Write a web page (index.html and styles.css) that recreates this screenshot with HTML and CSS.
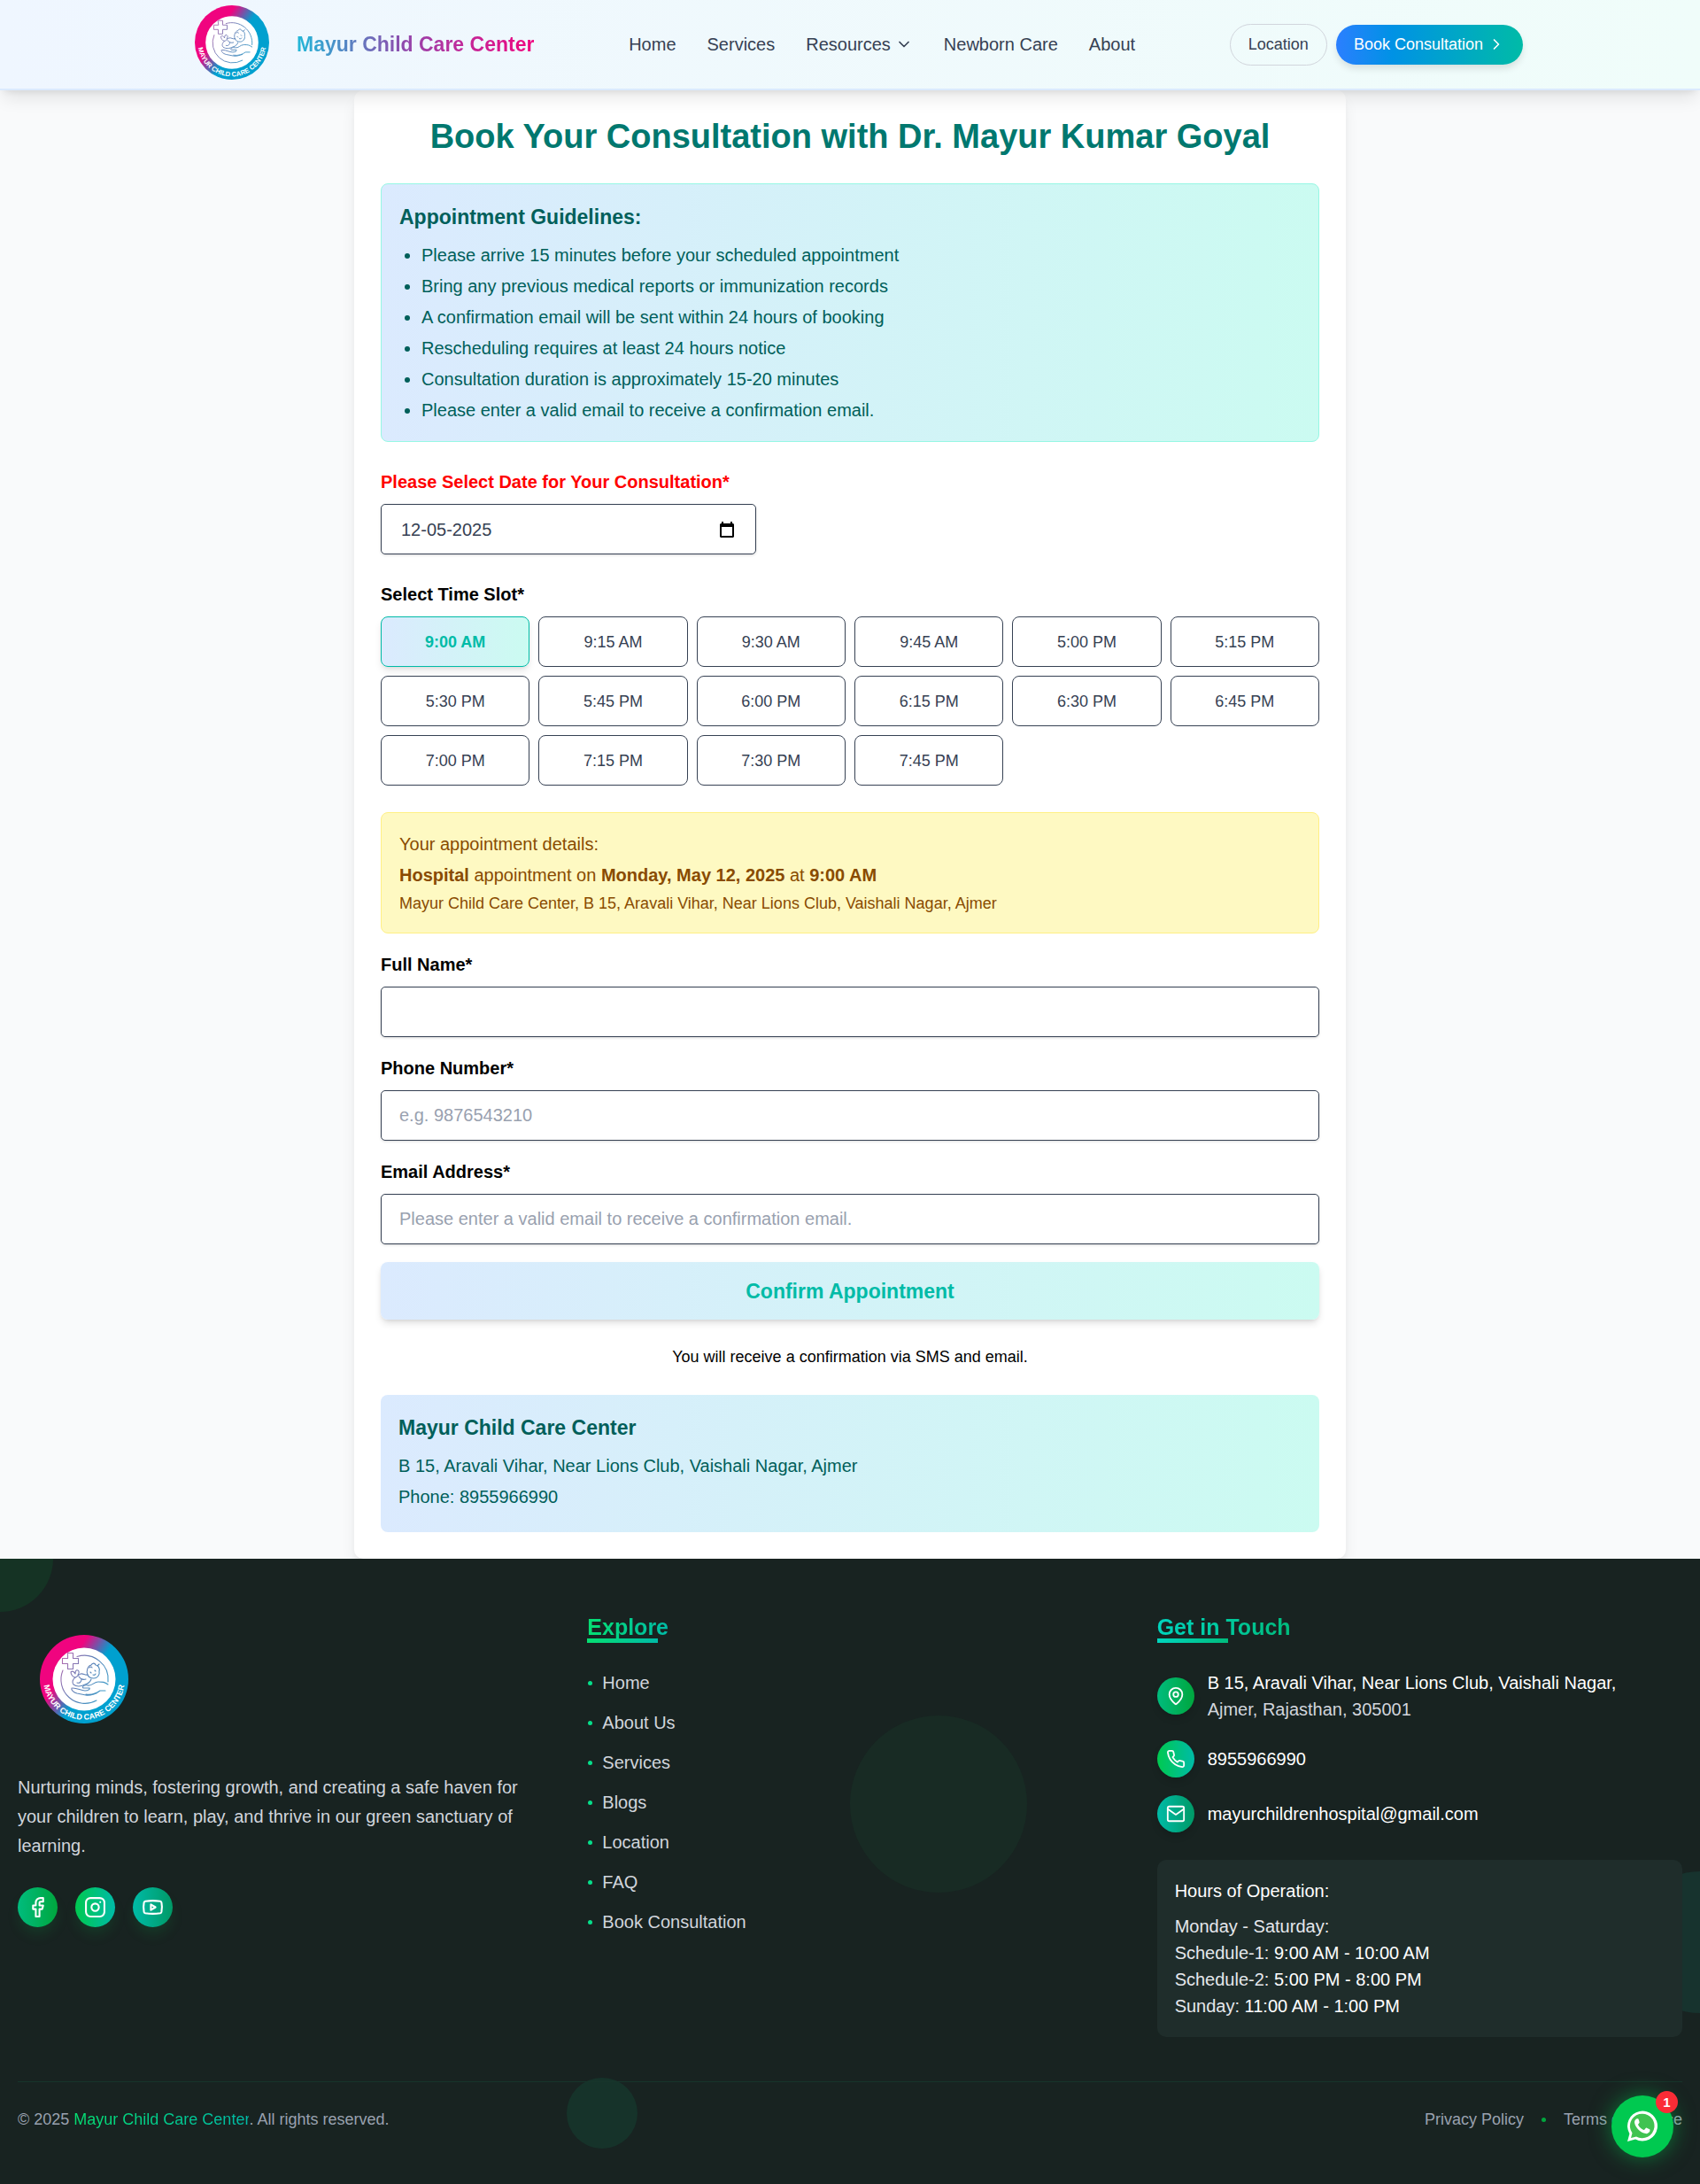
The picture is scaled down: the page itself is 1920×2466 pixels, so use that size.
FILE: index.html
```html
<!DOCTYPE html>
<html lang="en">
<head>
<meta charset="utf-8">
<meta name="viewport" content="width=device-width, initial-scale=1">
<title>Book Consultation | Mayur Child Care Center</title>
<link rel="stylesheet" href="styles.css">
</head>
<body>
<svg class="sprite" aria-hidden="true">
  <defs>
    <linearGradient id="ring" gradientUnits="userSpaceOnUse" x1="30" y1="37" x2="54" y2="53">
      <stop offset="0" stop-color="#f0047f"/><stop offset="1" stop-color="#00a0cf"/>
    </linearGradient>
    <linearGradient id="line" gradientUnits="userSpaceOnUse" x1="24" y1="30" x2="78" y2="60">
      <stop offset="0" stop-color="#b06bb0"/><stop offset=".5" stop-color="#5f83b8"/><stop offset="1" stop-color="#3a9cc8"/>
    </linearGradient>
    <path id="arc" d="M4.500 56.500 A46 46 0 0 0 95.500 56.500"/>
    <symbol id="logo" viewBox="0 0 100 100">
      <circle cx="50" cy="50" r="50" fill="url(#ring)"/>
      <circle cx="50" cy="50" r="35.500" fill="#fff"/>
      <g fill="none" stroke="url(#line)" stroke-width="1.100" stroke-linecap="round" stroke-linejoin="round">
        <path d="M42 24.500A27 27 0 0 1 77 53M26 40a27 27 0 0 0 38 34"/>
        <path d="M31.500 20.500h6v6h6v6h-6v6h-6v-6h-6v-6h6z"/>
        <path d="M54 45c-2-4 0-10 4-11 1-2 4-3 5 0 3 0 5 4 4 7 1 4-2 8-6 8-3 0-6-1-7-4z"/>
        <path d="M57 42l1 1M62 40l1 1M60 45q2 1 3-1M56 37q2-2 3 0M65 35l2-2"/>
        <path d="M54 45c-3 1-5-2-8-1-3 1-4 4-6 4-3 0-5-4-5-6 2-2 4 0 5 2 0-3 1-5 3-4 2 1 1 4 0 5"/>
        <path d="M40 48c-3 2-4 6-2 8 4 3 9 2 13 0 4-1 6-3 7-6M44 47c2 3 5 4 8 3M47 50c0 3-2 5-5 4"/>
        <path d="M36 60c-1 2 2 5 6 6l10 2c4 1 8-1 12-2M37 60c6 0 9 3 14 3 4 0 6-2 5-3l-7 0c-2-2 2-4 5-3 5 1 7-4 12-4s7 0 11 3M52 67c7 1 12-1 16-4l6 0"/>
      </g>
      <text class="logo-text"><textPath href="#arc" startOffset="50%" text-anchor="middle">MAYUR CHILD CARE CENTER</textPath></text>
    </symbol>
  </defs>
</svg>

<header class="site-header">
  <div class="header-inner">
    <a class="brand" href="#">
      <svg class="brand-logo" role="img" aria-label="Logo"><use href="#logo"/></svg>
      <span class="brand-name">Mayur Child Care Center</span>
    </a>
    <nav class="main-nav" aria-label="Main">
      <a href="#">Home</a>
      <a href="#">Services</a>
      <a class="has-menu" href="#">Resources
        <svg class="icon" width="20" height="20" viewBox="0 0 24 24"><path d="m6 9 6 6 6-6"/></svg></a>
      <a href="#">Newborn Care</a>
      <a href="#">About</a>
    </nav>
    <div class="header-actions">
      <a class="pill pill-outline" href="#">Location</a>
      <a class="pill pill-solid" href="#">Book Consultation
        <svg class="icon" width="20" height="20" viewBox="0 0 24 24"><path d="m9 18 6-6-6-6"/></svg></a>
    </div>
  </div>
</header>

<main>
  <form class="booking">
    <h1>Book Your Consultation with Dr. Mayur Kumar Goyal</h1>

    <section class="guidelines">
      <h2>Appointment Guidelines:</h2>
      <ul>
        <li>Please arrive 15 minutes before your scheduled appointment</li>
        <li>Bring any previous medical reports or immunization records</li>
        <li>A confirmation email will be sent within 24 hours of booking</li>
        <li>Rescheduling requires at least 24 hours notice</li>
        <li>Consultation duration is approximately 15-20 minutes</li>
        <li>Please enter a valid email to receive a confirmation email.</li>
      </ul>
    </section>

    <div class="group">
      <label class="required" for="date">Please Select Date for Your Consultation*</label>
      <div class="field date-field">
        <input id="date" type="text" value="12-05-2025">
        <svg width="16" height="18" viewBox="0 0 16 18" aria-hidden="true"><path fill="#000" fill-rule="evenodd" d="M2 0h2v2h8V0h2v2h1l1 1v14l-1 1H1l-1-1V3l1-1h1zM2 6v10h12V6z"/></svg>
      </div>
    </div>

    <div class="group">
      <span class="label" id="slot-label">Select Time Slot*</span>
      <div class="slots" role="group" aria-labelledby="slot-label">
        <button class="slot selected" type="button" aria-pressed="true">9:00 AM</button>
        <button class="slot" type="button">9:15 AM</button>
        <button class="slot" type="button">9:30 AM</button>
        <button class="slot" type="button">9:45 AM</button>
        <button class="slot" type="button">5:00 PM</button>
        <button class="slot" type="button">5:15 PM</button>
        <button class="slot" type="button">5:30 PM</button>
        <button class="slot" type="button">5:45 PM</button>
        <button class="slot" type="button">6:00 PM</button>
        <button class="slot" type="button">6:15 PM</button>
        <button class="slot" type="button">6:30 PM</button>
        <button class="slot" type="button">6:45 PM</button>
        <button class="slot" type="button">7:00 PM</button>
        <button class="slot" type="button">7:15 PM</button>
        <button class="slot" type="button">7:30 PM</button>
        <button class="slot" type="button">7:45 PM</button>
      </div>
    </div>

    <div class="fields">
      <section class="summary">
        <p>Your appointment details:</p>
        <p><strong>Hospital</strong> appointment on <strong>Monday, May 12, 2025</strong> at <strong>9:00 AM</strong></p>
        <p class="small">Mayur Child Care Center, B 15, Aravali Vihar, Near Lions Club, Vaishali Nagar, Ajmer</p>
      </section>
      <div>
        <label for="name">Full Name*</label>
        <input class="field" id="name" type="text">
      </div>
      <div>
        <label for="phone">Phone Number*</label>
        <input class="field" id="phone" type="tel" placeholder="e.g. 9876543210">
      </div>
      <div>
        <label for="email">Email Address*</label>
        <input class="field" id="email" type="email" placeholder="Please enter a valid email to receive a confirmation email.">
      </div>
      <button class="confirm" type="submit">Confirm Appointment</button>
    </div>

    <p class="note">You will receive a confirmation via SMS and email.</p>

    <section class="clinic">
      <h2>Mayur Child Care Center</h2>
      <p>B 15, Aravali Vihar, Near Lions Club, Vaishali Nagar, Ajmer</p>
      <p>Phone: 8955966990</p>
    </section>
  </form>
</main>

<footer class="site-footer">
  <span class="blob blob-a"></span>
  <span class="blob blob-b"></span>
  <span class="blob blob-c"></span>
  <span class="blob blob-d"></span>

  <div class="footer-grid">
    <div class="about">
      <svg class="footer-logo" role="img" aria-label="Logo"><use href="#logo"/></svg>
      <p>Nurturing minds, fostering growth, and creating a safe haven for your children to learn, play, and thrive in our green sanctuary of learning.</p>
      <div class="social">
        <a class="round g1" href="#" aria-label="Facebook"><svg class="icon" width="25" height="25" viewBox="0 0 24 24"><path d="M18 2h-3a5 5 0 0 0-5 5v3H7v4h3v8h4v-8h3l1-4h-4V7a1 1 0 0 1 1-1h3z"/></svg></a>
        <a class="round g2" href="#" aria-label="Instagram"><svg class="icon" width="25" height="25" viewBox="0 0 24 24"><rect x="2" y="2" width="20" height="20" rx="5"/><circle cx="12" cy="12" r="4"/><path d="M17.500 6.500h.01"/></svg></a>
        <a class="round g3" href="#" aria-label="YouTube"><svg class="icon" width="25" height="25" viewBox="0 0 24 24"><path d="M2.500 17a24 24 0 0 1 0-10 2 2 0 0 1 1.400-1.400 50 50 0 0 1 16.200 0A2 2 0 0 1 21.500 7a24 24 0 0 1 0 10 2 2 0 0 1-1.400 1.400 50 50 0 0 1-16.200 0A2 2 0 0 1 2.500 17"/><path d="m10 15 5-3-5-3z"/></svg></a>
      </div>
    </div>

    <nav class="explore" aria-label="Explore">
      <h3 class="title-a">Explore</h3>
      <ul>
        <li><a href="#">Home</a></li>
        <li><a href="#">About Us</a></li>
        <li><a href="#">Services</a></li>
        <li><a href="#">Blogs</a></li>
        <li><a href="#">Location</a></li>
        <li><a href="#">FAQ</a></li>
        <li><a href="#">Book Consultation</a></li>
      </ul>
    </nav>

    <div class="touch">
      <h3 class="title-b">Get in Touch</h3>
      <address>
        <div class="contact">
          <span class="round g1"><svg class="icon" width="22" height="22" viewBox="0 0 24 24"><path d="M20 10c0 5-5.500 10.200-7.400 11.800a1 1 0 0 1-1.200 0C9.500 20.200 4 15 4 10a8 8 0 0 1 16 0"/><circle cx="12" cy="10" r="3"/></svg></span>
          <p>B 15, Aravali Vihar, Near Lions Club, Vaishali Nagar,<br><span class="muted">Ajmer, Rajasthan, 305001</span></p>
        </div>
        <div class="contact">
          <span class="round g2"><svg class="icon" width="22" height="22" viewBox="0 0 24 24"><path d="M22 16.920v3a2 2 0 0 1-2.180 2 19.790 19.790 0 0 1-8.630-3.070 19.500 19.500 0 0 1-6-6 19.790 19.790 0 0 1-3.070-8.670A2 2 0 0 1 4.110 2h3a2 2 0 0 1 2 1.720c.13.96.36 1.900.7 2.810a2 2 0 0 1-.45 2.110L8.090 9.910a16 16 0 0 0 6 6l1.270-1.270a2 2 0 0 1 2.110-.45c.91.34 1.850.57 2.810.7A2 2 0 0 1 22 16.920z"/></svg></span>
          <a href="#">8955966990</a>
        </div>
        <div class="contact">
          <span class="round g3"><svg class="icon" width="22" height="22" viewBox="0 0 24 24"><rect x="2" y="3" width="20" height="18" rx="2"/><path d="m2 6 10 7 10-7"/></svg></span>
          <a href="#">mayurchildrenhospital@gmail.com</a>
        </div>
      </address>
      <div class="hours">
        <h4>Hours of Operation:</h4>
        <p>Monday - Saturday:</p>
        <p>Schedule-1: <b>9:00 AM - 10:00 AM</b></p>
        <p>Schedule-2: <b>5:00 PM - 8:00 PM</b></p>
        <p>Sunday: <b>11:00 AM - 1:00 PM</b></p>
      </div>
    </div>
  </div>

  <div class="legal">
    <p>© 2025 <span class="legal-name">Mayur Child Care Center</span>. All rights reserved.</p>
    <div class="legal-links">
      <a href="#">Privacy Policy</a>
      <span class="dot"></span>
      <a href="#">Terms of Service</a>
    </div>
  </div>

  <a class="whatsapp" href="#" aria-label="Chat on WhatsApp">
    <svg width="36" height="36" viewBox="0 0 36 36">
      <path fill="#fff" d="M1 35l2.400-8.700A17 17 0 1 1 10 32.600z"/>
      <path fill="#40c351" d="M5 31l1.500-5.500A13.800 13.800 0 1 1 11 29.500z"/>
      <path fill="#fff" d="M13.600 10c-.3-.8-.7-.8-1.100-.8-.8 0-1.600.2-2.200 1-1 1.100-1.400 2.400-1.200 3.800.5 3 2.500 5.700 4.700 7.900 2.400 2.300 4.700 3.600 7.900 4.200 1.700.3 4-1 4.500-2.300.3-.8.4-1.900.2-2.200-.4-.5-3.500-2-4.200-2.100-.6-.1-1.700 2.400-2.300 2.500-.7.100-3.500-1.500-5-3.200-1-1.100-1.900-2.500-1.800-3 .1-.6 1.500-1.700 1.500-2.400 0-.5-.7-2.500-1-3.400z"/>
    </svg>
    <span class="badge">1</span>
  </a>
</footer>
</body>
</html>
```

FILE: styles.css
```css
* {
  box-sizing: border-box;
  margin: 0;
  padding: 0;
}

body {
  font: 20px/30px "Liberation Sans", Arial, sans-serif;
  color: #000;
  background: #f9fafb;
}

a {
  color: inherit;
  text-decoration: none;
}

ul {
  list-style: none;
}

button,
input {
  font: inherit;
}

.sprite {
  position: absolute;
  width: 0;
  height: 0;
}

.icon {
  display: block;
  fill: none;
  stroke: currentColor;
  stroke-width: 2;
  stroke-linecap: round;
  stroke-linejoin: round;
}

.logo-text {
  font: bold 9px "Liberation Sans", Arial, sans-serif;
  fill: #fff;
}

/* Header */

.site-header {
  position: relative;
  z-index: 2;
  border-bottom: 2px solid #dbeafe;
  background: linear-gradient(90deg, #eff6ff, #f0fdfa);
  box-shadow: 0 12px 19px -4px rgba(0, 0, 0, .1), 0 5px 8px -5px rgba(0, 0, 0, .1);
}

.header-inner {
  display: flex;
  align-items: center;
  justify-content: space-between;
  max-width: 1600px;
  min-height: 100px;
  margin: 0 auto;
  padding: 0 40px;
}

.brand {
  display: flex;
  align-items: center;
  gap: 31px;
  padding-left: 20px;
}

.brand-logo {
  width: 84px;
  height: 84px;
  margin-bottom: 4px;
}

.brand-name {
  font-size: 23px;
  font-weight: bold;
  color: transparent;
  background: linear-gradient(90deg, #22b8d8, #9b3fa8 50%, #b8309e 65%, #f0047f);
  background-clip: text;
}

.main-nav {
  display: flex;
  gap: 35px;
  color: #364153;
}

.has-menu {
  display: flex;
  align-items: center;
  gap: 5px;
}

.header-actions {
  display: flex;
  align-items: center;
  gap: 10px;
}

.pill {
  display: flex;
  align-items: center;
  gap: 5px;
  padding: 10px 20px;
  border-radius: 24px;
  font-size: 18px;
  line-height: 25px;
}

.pill-outline {
  border: 1px solid #d1d5dc;
  color: #364153;
}

.pill-solid {
  color: #fff;
  background: linear-gradient(90deg, #2b7fff, #0092e5 30%, #00bba7);
  box-shadow: 0 5px 8px -1px rgba(0, 0, 0, .12);
}

/* Booking card */

.booking {
  max-width: 1120px;
  margin: 0 auto;
  padding: 30px;
  border-radius: 10px;
  background: #fff;
  box-shadow: 0 12px 19px -4px rgba(0, 0, 0, .1), 0 5px 8px -5px rgba(0, 0, 0, .1);
}

h1 {
  margin-bottom: 30px;
  text-align: center;
  font-size: 38px;
  line-height: 45px;
  color: #00786f;
}

h2 {
  margin-bottom: 10px;
  font-size: 23px;
  line-height: 35px;
  color: #005f5a;
}

.guidelines,
.clinic {
  padding: 20px;
  border-radius: 8px;
  color: #005f5a;
  background: linear-gradient(90deg, #dbeafe, #cbfbf1);
}

.guidelines {
  margin-bottom: 30px;
  border: 1px solid #96f7e4;
}

.guidelines ul {
  display: grid;
  gap: 5px;
  padding-left: 25px;
  list-style: disc;
}

.group {
  margin-bottom: 30px;
}

label,
.label {
  display: block;
  margin-bottom: 10px;
  font-weight: bold;
}

.required {
  color: #f00;
}

.field {
  display: block;
  width: 100%;
  height: 57px;
  padding: 0 20px;
  border: 1px solid #364153;
  border-radius: 5px;
  color: #364153;
  background: #fff;
  box-shadow: 0 1px 3px rgba(0, 0, 0, .15);
}

.field::placeholder {
  color: #99a1af;
}

.date-field {
  display: flex;
  align-items: center;
  justify-content: space-between;
  width: 40%;
  padding: 0 24px 0 22px;
}

.date-field input {
  flex: 1;
  min-width: 0;
  border: 0;
  outline: 0;
  color: #364153;
  background: none;
}

.slots {
  display: grid;
  grid-template-columns: repeat(6, 1fr);
  gap: 10px;
}

.slot {
  height: 57px;
  border: 1px solid #364153;
  border-radius: 8px;
  font-size: 18px;
  color: #364153;
  background: #fff;
}

.slot.selected {
  border-color: #00bba7;
  font-weight: bold;
  color: #00bba7;
  background: linear-gradient(90deg, #dbeafe, #cbfbf1);
  box-shadow: 0 5px 8px -1px rgba(0, 0, 0, .1), 0 2px 5px -2px rgba(0, 0, 0, .1);
}

.fields {
  display: grid;
  gap: 20px;
  margin-bottom: 30px;
}

.summary {
  display: grid;
  gap: 5px;
  padding: 20px;
  border: 1px solid #fff085;
  border-radius: 8px;
  color: #894b00;
  background: #fef9c2;
}

.small {
  font-size: 18px;
  line-height: 25px;
}

.confirm {
  height: 65px;
  border: 0;
  border-radius: 8px;
  font-size: 23px;
  font-weight: bold;
  color: #00bba7;
  background: linear-gradient(90deg, #dbeafe, #cbfbf1);
  box-shadow: 0 5px 8px -1px rgba(0, 0, 0, .12), 0 2px 5px -2px rgba(0, 0, 0, .12);
}

.note {
  margin-bottom: 30px;
  text-align: center;
  font-size: 18px;
  line-height: 25px;
}

.clinic p {
  margin-bottom: 5px;
}

/* Footer */

.site-footer {
  position: relative;
  overflow: hidden;
  padding: 60px 20px;
  color: #d1d5dc;
  background: #182321;
}

.blob {
  position: absolute;
  border-radius: 50%;
}

.blob-a {
  top: -60px;
  left: -60px;
  width: 120px;
  height: 120px;
  background: #153324;
}

.blob-b {
  top: 25%;
  left: 50%;
  width: 200px;
  height: 200px;
  background: #182b24;
}

.blob-c {
  top: 50%;
  right: -80px;
  width: 160px;
  height: 160px;
  background: #17332e;
}

.blob-d {
  bottom: 40px;
  left: calc(100% / 3);
  width: 80px;
  height: 80px;
  background: #16332a;
}

.footer-grid {
  position: relative;
  display: grid;
  grid-template-columns: repeat(3, 1fr);
  gap: 50px;
  padding-bottom: 50px;
}

.footer-logo {
  display: block;
  width: 100px;
  height: 100px;
  margin: 26px 0 56px 25px;
}

.about p {
  margin-bottom: 30px;
  line-height: 33px;
}

.social {
  display: flex;
  gap: 20px;
}

.round {
  display: grid;
  place-items: center;
  width: 42px;
  height: 42px;
  border-radius: 50%;
  color: #fff;
  box-shadow: 0 5px 8px -1px rgba(0, 0, 0, .15);
}

.social .round {
  width: 45px;
  height: 45px;
  box-shadow: 0 10px 16px -3px rgba(0, 201, 80, .15);
}

.g1 {
  background: linear-gradient(90deg, #00bc7d, #00a63e);
}

.g2 {
  background: linear-gradient(90deg, #00c950, #00bba7);
}

.g3 {
  background: linear-gradient(90deg, #00bba7, #009966);
}

h3 {
  position: relative;
  width: fit-content;
  margin-bottom: 30px;
  font-size: 25px;
  line-height: 35px;
  color: transparent;
  background-clip: text;
}

h3::after {
  content: "";
  position: absolute;
  bottom: 0;
  left: 0;
  width: 80px;
  height: 5px;
}

.title-a {
  background-image: linear-gradient(90deg, #05df72, #00bba7);
  background-clip: text;
}

.title-a::after {
  background: linear-gradient(90deg, #05df72, #00bba7);
}

.title-b {
  background-image: linear-gradient(90deg, #00d5be, #00bc7d);
  background-clip: text;
}

.title-b::after {
  background: linear-gradient(90deg, #00d5be, #00bc7d);
}

.explore ul {
  display: grid;
  gap: 15px;
}

.explore li {
  display: flex;
  align-items: center;
  gap: 11px;
}

.explore li::before {
  content: "";
  width: 5px;
  height: 5px;
  margin-left: 1px;
  border-radius: 50%;
  background: #05df8a;
}

address {
  display: grid;
  gap: 20px;
  margin-bottom: 31px;
  font-style: normal;
  color: #fff;
}

.contact {
  display: flex;
  align-items: center;
  gap: 15px;
}

.muted {
  color: #d1d5dc;
}

.hours {
  padding: 20px;
  border-radius: 10px;
  color: #e5e7eb;
  background: #1f2d2b;
}

.hours h4 {
  margin-bottom: 10px;
  font-weight: normal;
  color: #fff;
}

.hours b {
  font-weight: normal;
  color: #fff;
}

.legal {
  position: relative;
  display: flex;
  justify-content: space-between;
  padding-top: 30px;
  border-top: 1px solid #17352b;
  font-size: 18px;
  line-height: 25px;
  color: #99a1af;
}

.legal-name {
  color: transparent;
  background: linear-gradient(90deg, #05df72, #00bba7);
  background-clip: text;
}

.legal-links {
  display: flex;
  align-items: center;
  gap: 20px;
}

.dot {
  width: 5px;
  height: 5px;
  border-radius: 50%;
  background: #00a63e;
}

.whatsapp {
  position: absolute;
  right: 30px;
  bottom: 30px;
  display: grid;
  place-items: center;
  width: 70px;
  height: 70px;
  border-radius: 50%;
  background: #00c950;
  box-shadow: 0 0 25px rgba(0, 201, 80, .5);
}

.badge {
  position: absolute;
  top: -5px;
  right: -5px;
  width: 25px;
  height: 25px;
  border-radius: 50%;
  text-align: center;
  font-size: 15px;
  font-weight: bold;
  line-height: 25px;
  color: #fff;
  background: #fb2c36;
}
```
